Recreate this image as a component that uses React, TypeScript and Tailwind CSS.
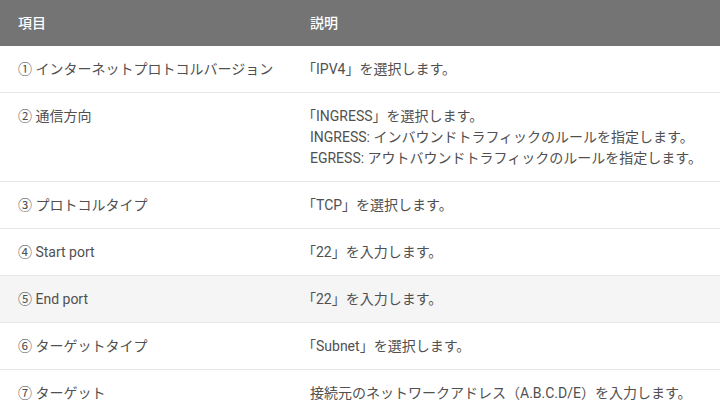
import React from "react";

const rows: { k: string; v: string[]; alt?: boolean }[] = [
  { k: "① インターネットプロトコルバージョン", v: ["「IPV4」を選択します。"] },
  {
    k: "② 通信方向",
    v: [
      "「INGRESS」を選択します。",
      "INGRESS: インバウンドトラフィックのルールを指定します。",
      "EGRESS: アウトバウンドトラフィックのルールを指定します。",
    ],
  },
  { k: "③ プロトコルタイプ", v: ["「TCP」を選択します。"] },
  { k: "④ Start port", v: ["「22」を入力します。"] },
  { k: "⑤ End port", v: ["「22」を入力します。"], alt: true },
  { k: "⑥ ターゲットタイプ", v: ["「Subnet」を選択します。"] },
  { k: "⑦ ターゲット", v: ["接続元のネットワークアドレス（A.B.C.D/E）を入力します。"] },
];

export default function App() {
  return (
    <div
      className="w-[720px] h-[416px] overflow-hidden bg-white text-[14px] leading-[21px] text-[#505050]"
      style={{ fontFamily: 'Roboto, "Noto Sans CJK JP", sans-serif' }}
    >
      <div className="flex h-[46px] items-center bg-[#747474] text-white font-medium">
        <div className="w-[292px] pl-[18px]">項目</div>
        <div className="flex-1 pl-[18px]">説明</div>
      </div>
      {rows.map((r, i) => (
        <div
          key={i}
          className={
            "flex border-b border-[#e6e6e6] py-[12.5px] " + (r.alt ? "bg-[#f5f5f5]" : "bg-white")
          }
        >
          <div className="w-[292px] pl-[18px]">{r.k}</div>
          <div className="flex-1 pl-[10px]">
            {r.v.map((l, j) => (
              <div key={j} className={l.startsWith("「") ? "" : "pl-[8px]"}>
                {l}
              </div>
            ))}
          </div>
        </div>
      ))}
    </div>
  );
}
